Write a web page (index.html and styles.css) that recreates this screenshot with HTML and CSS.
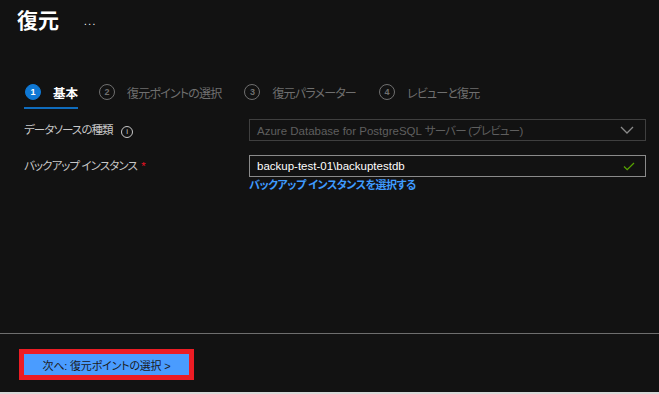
FILE: index.html
```html
<!DOCTYPE html>
<html lang="ja">
<head>
    <meta charset="UTF-8">
    <title>復元</title>
    <link rel="stylesheet" href="styles.css">
</head>
<body>
    <div class="page">
        <div class="content">
            <div class="header">
                <h1>復元</h1>
                <span class="more">...</span>
            </div>

            <div class="steps">
                <div class="step active">
                    <span class="num">1</span>
                    <span class="step-label">基本</span>
                </div>
                <div class="step">
                    <span class="num">2</span>
                    <span class="step-label">復元ポイントの選択</span>
                </div>
                <div class="step">
                    <span class="num">3</span>
                    <span class="step-label">復元パラメーター</span>
                </div>
                <div class="step">
                    <span class="num">4</span>
                    <span class="step-label">レビューと復元</span>
                </div>
            </div>

            <div class="form">
                <div class="row">
                    <div class="label">データソースの種類 <span class="info">i</span></div>
                    <div class="field">
                        <div class="select disabled">
                            <span>Azure Database for PostgreSQL <span class="jp">サーバー (プレビュー)</span></span>
                            <svg width="14" height="8" viewBox="0 0 14 8"><path d="M1 1 L7 7 L13 1" fill="none" stroke="#8a8a8a" stroke-width="1.3"/></svg>
                        </div>
                    </div>
                </div>
                <div class="row">
                    <div class="label">バックアップ インスタンス <span class="req">*</span></div>
                    <div class="field">
                        <div class="select">
                            <span>backup-test-01\backuptestdb</span>
                            <svg width="12" height="9" viewBox="0 0 12 9"><path d="M1 4.5 L4.2 7.7 L11 1" fill="none" stroke="#57a300" stroke-width="1.3"/></svg>
                        </div>
                        <a href="#" class="link">バックアップ インスタンスを選択する</a>
                    </div>
                </div>
            </div>
        </div>

        <div class="footer">
            <div class="highlight">
                <button class="next">次へ: 復元ポイントの選択 &gt;</button>
            </div>
        </div>
    </div>
</body>
</html>
```

FILE: styles.css
```css
body {
    margin: 0;
    background-color: #121212;
    color: #ffffff;
    font-family: "Liberation Sans", "Noto Sans CJK JP", sans-serif;
    font-size: 12px;
    font-feature-settings: "palt";
}

.page {
    height: 394px;
    display: flex;
    flex-direction: column;
    border-bottom: 2px solid #d8d8d8;
    box-sizing: border-box;
}

.content {
    height: 333px;
    border-bottom: 1px solid #6e6e6e;
}

.header {
    display: flex;
    align-items: center;
    padding: 5px 0 0 17px;
    height: 32px;
}

.header h1 {
    margin: 0;
    font-size: 21px;
    font-weight: bold;
    line-height: 32px;
}

.more {
    margin-left: 25px;
    font-size: 10px;
    letter-spacing: 1.5px;
    margin-top: 1px;
}

.steps {
    display: flex;
    margin: 40px 0 0 24px;
    height: 32px;
}

.step {
    display: flex;
    align-items: center;
    height: 30px;
    margin-right: 22px;
    color: #6f6f6f;
    border-bottom: 2px solid transparent;
}

.step.active {
    color: #ffffff;
    border-bottom-color: #0f6cbd;
    margin-right: 20px;
}

.step-label {
    letter-spacing: -0.8px;
}

.num {
    width: 14px;
    height: 14px;
    border: 1px solid #6f6f6f;
    border-radius: 50%;
    display: flex;
    align-items: center;
    justify-content: center;
    font-size: 9px;
    font-weight: bold;
    letter-spacing: 0;
    margin-right: 12px;
    margin-left: 1px;
}

.step.active .num {
    background-color: #0f78d4;
    border-color: #0f78d4;
    color: #ffffff;
}

.step.active .step-label {
    font-size: 12.5px;
    font-weight: bold;
    letter-spacing: 0;
}

.form {
    margin: 10px 13px 0 24px;
}

.row {
    display: flex;
    margin-bottom: 14px;
}

.label {
    width: 225px;
    color: #c8c8c8;
    line-height: 22px;
    font-size: 11.5px;
    letter-spacing: -0.9px;
}

.info {
    display: inline-flex;
    align-items: center;
    justify-content: center;
    width: 10px;
    height: 10px;
    border: 1px solid #c8c8c8;
    border-radius: 50%;
    font-size: 8px;
    margin-left: 6px;
    line-height: 10px;
    letter-spacing: 0;
}

.req {
    color: #e81123;
    margin-left: 2px;
}

.field {
    flex: 1;
}

.select {
    height: 22px;
    border: 1px solid #8a8a8a;
    box-sizing: border-box;
    display: flex;
    align-items: center;
    justify-content: space-between;
    padding: 0 10px 0 7px;
    color: #ffffff;
    font-size: 11.5px;
}

.select .jp {
    letter-spacing: -0.8px;
}

.select.disabled {
    border-color: #3f3f3f;
    color: #5f5f5f;
}

.select.disabled svg {
    margin-right: 1px;
}

.link {
    display: block;
    color: #3f9bff;
    font-weight: bold;
    text-decoration: none;
    font-size: 11px;
    letter-spacing: -0.5px;
    line-height: 17px;
}

.footer {
    padding: 15px 0 0 19px;
}

.highlight {
    display: inline-block;
    border: 5px solid #ec1c24;
}

.next {
    display: block;
    width: 165px;
    height: 21px;
    background-color: #4a9cff;
    color: #1a1a1a;
    border: none;
    font-family: "Liberation Sans", "Noto Sans CJK JP", sans-serif;
    font-feature-settings: "palt";
    font-size: 11px;
    letter-spacing: -0.2px;
    padding: 0;
}
```
